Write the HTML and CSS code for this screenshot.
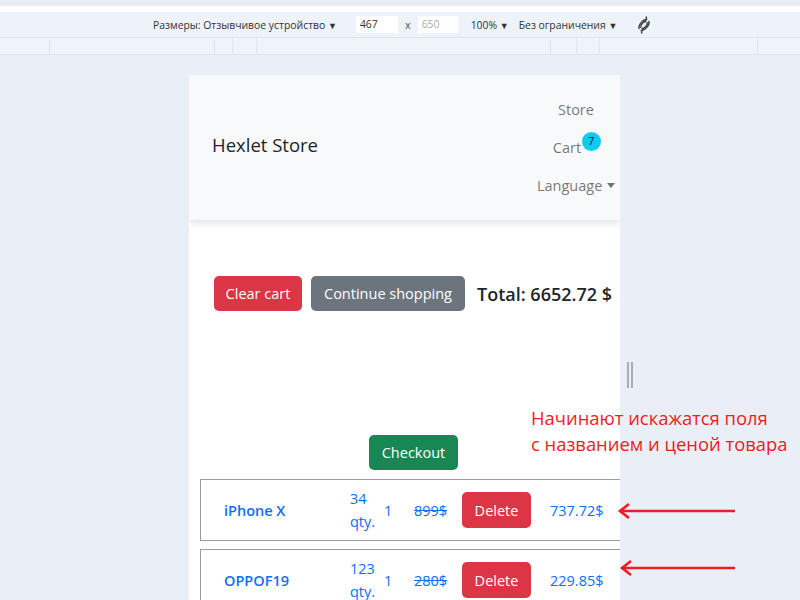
FILE: index.html
```html
<!DOCTYPE html>
<html lang="ru">
<head>
<meta charset="utf-8">
<title>Hexlet Store</title>
<link rel="stylesheet" href="styles.css">
</head>
<body>
<div class="strip-gray"></div>
<div class="strip-white"></div>
<div class="toolbar">
  <span class="tb-item">Размеры: Отзывчивое устройство <span class="tri">▼</span></span>
  <span class="tb-input">467</span>
  <span class="tb-x">x</span>
  <span class="tb-input tb-dim">650</span>
  <span class="tb-item tb-zoom">100% <span class="tri">▼</span></span>
  <span class="tb-item">Без ограничения <span class="tri">▼</span></span>
  <svg class="tb-rotate" width="18" height="18" viewBox="0 0 18 18">
    <g fill="none" stroke="#444" stroke-width="1.5" stroke-linecap="round" transform="rotate(-50 9 9)">
      <path d="M3.2 7.4 A6.2 3.2 0 0 1 14.8 7.4"/>
      <path d="M14.8 10.6 A6.2 3.2 0 0 1 3.2 10.6"/>
      <path d="M5.2 10 A4 2 0 0 0 12.8 10"/>
      <path d="M12.8 8 A4 2 0 0 0 5.2 8"/>
      <path d="M14.8 7.4 L16.6 5.6 M14.8 7.4 L12.6 6.6"/>
      <path d="M3.2 10.6 L1.4 12.4 M3.2 10.6 L5.4 11.4"/>
    </g>
  </svg>
</div>
<div class="ruler">
  <span class="rl" style="width:50px"></span>
  <span class="rl" style="width:165px"></span>
  <span class="rl" style="width:18px"></span>
  <span class="rl" style="width:24px"></span>
  <span class="rl" style="width:294px"></span>
  <span class="rl" style="width:26px"></span>
  <span class="rl" style="width:23px"></span>
  <span class="rl" style="width:158px"></span>
</div>
<div class="stage">
  <div class="viewport">
    <nav class="navbar">
      <span class="brand">Hexlet Store</span>
      <ul class="nav">
        <li class="nav-link">Store</li>
        <li class="nav-link cart">Cart<span class="badge">7</span></li>
        <li class="nav-link">Language <span class="caret"></span></li>
      </ul>
    </nav>
    <main class="content">
      <div class="actions">
        <button class="btn btn-danger">Clear cart</button>
        <button class="btn btn-secondary">Continue shopping</button>
        <span class="total">Total: 6652.72 $</span>
      </div>
      <div class="checkout-wrap">
        <button class="btn btn-success">Checkout</button>
      </div>
      <div class="item">
        <span class="name">iPhone X</span>
        <span class="qty">34<br>qty.</span>
        <span class="count">1</span>
        <span class="old">899$</span>
        <button class="btn btn-danger">Delete</button>
        <span class="price">737.72$</span>
      </div>
      <div class="item">
        <span class="name">OPPOF19</span>
        <span class="qty">123<br>qty.</span>
        <span class="count">1</span>
        <span class="old">280$</span>
        <button class="btn btn-danger">Delete</button>
        <span class="price">229.85$</span>
      </div>
    </main>
  </div>
  <div class="handle"></div>
</div>
<div class="note">Начинают искажатся поля<br>с названием и ценой товара</div>
<svg class="arrow arrow-1" width="124" height="16" viewBox="0 0 124 16">
  <path d="M4 8 H118 M12 1 L3 8 L12 15" fill="none" stroke="#ee1c24" stroke-width="2.6"/>
</svg>
<svg class="arrow arrow-2" width="124" height="16" viewBox="0 0 124 16">
  <path d="M4 8 H116 M12 1 L3 8 L12 15" fill="none" stroke="#ee1c24" stroke-width="2.6"/>
</svg>
</body>
</html>
```
FILE: styles.css
```css
* { box-sizing: border-box; }
html, body { margin: 0; padding: 0; }
body {
  width: 800px;
  height: 600px;
  overflow: hidden;
  background: #eaeef6;
  font-family: "Open Sans", "Noto Sans", sans-serif;
  position: relative;
}
.strip-gray { height: 6px; background: #e8ecf4; }
.strip-white { height: 6px; background: #ffffff; }
.toolbar {
  height: 25px;
  background: #eef2f9;
  display: flex;
  align-items: center;
  padding-left: 153px;
  font-size: 10.4px;
  color: #333;
}
.tb-item { white-space: nowrap; }
.tri { font-size: 9px; }
.tb-input {
  background: #fff;
  width: 42px;
  height: 17px;
  line-height: 17px;
  padding-left: 4px;
  margin-left: 19px;
}
.tb-dim { color: #aaa; margin-left: 7px; width: 40px; }
.tb-x { margin-left: 7px; font-size: 11px; color: #555; }
.tb-zoom { margin-left: 13px; margin-right: 10px; }
.tb-rotate { margin-left: 18px; }
.ruler {
  height: 18px;
  background: #eff3fa;
  border-top: 1px solid #dfe6f1;
  border-bottom: 1px solid #dfe6f1;
  display: flex;
}
.rl { height: 100%; border-right: 1px solid #dce4f0; flex: none; }
.stage {
  display: flex;
  padding-top: 20px;
  padding-left: 189px;
  height: 545px;
}
.viewport {
  width: 431px;
  height: 525px;
  background: #fff;
  overflow: hidden;
  flex: none;
}
.handle {
  width: 6px;
  height: 26px;
  margin-top: 287px;
  margin-left: 7px;
  border-left: 2px solid #a9adb3;
  border-right: 2px solid #a9adb3;
}
.navbar {
  height: 145px;
  background: #f8f9fa;
  box-shadow: 0 3px 8px rgba(0,0,0,0.12);
  display: flex;
  align-items: center;
  padding-left: 23px;
  position: relative;
}
.brand {
  font-size: 18.5px;
  color: #212529;
  font-weight: 500;
  flex: 1;
  margin-bottom: 6px;
}
.nav {
  list-style: none;
  margin: 0;
  padding: 0;
  width: 80px;
  margin-right: 4px;
  display: flex;
  flex-direction: column;
  align-items: center;
}
.nav-link {
  font-size: 14.5px;
  line-height: 24px;
  padding: 7px 0;
  color: rgba(0,0,0,0.55);
  position: relative;
}
.cart { margin-right: 18px; }
.badge {
  position: absolute;
  left: 29px;
  top: 3px;
  width: 19px;
  height: 19px;
  border-radius: 50%;
  background: #0dcaf0;
  color: #111;
  font-size: 10.5px;
  line-height: 19px;
  text-align: center;
}
.caret {
  display: inline-block;
  width: 0;
  height: 0;
  border-left: 4.5px solid transparent;
  border-right: 4.5px solid transparent;
  border-top: 5px solid rgba(0,0,0,0.55);
  vertical-align: 3px;
  margin-left: 1px;
}
.content { padding-top: 56px; }
.actions {
  display: flex;
  align-items: center;
  padding-left: 25px;
  gap: 9px;
}
.btn {
  font-family: inherit;
  font-size: 14.5px;
  height: 35px;
  border: none;
  border-radius: 5px;
  color: #fff;
  padding: 0 11px;
  cursor: pointer;
}
.btn-danger { background: #dc3545; }
.btn-secondary { background: #6c757d; }
.btn-success { background: #198754; }
.actions .btn-danger { width: 88px; }
.actions .btn-secondary { width: 154px; }
.total {
  font-size: 18px;
  font-weight: 600;
  color: #212529;
  margin-left: 3px;
  white-space: nowrap;
}
.checkout-wrap {
  padding-top: 124px;
  padding-left: 180px;
  height: 168px;
}
.checkout-wrap .btn { width: 89px; }
.item {
  margin-left: 11px;
  width: 440px;
  height: 62px;
  border: 1px solid #9a9a9a;
  display: grid;
  grid-template-columns: 126px 34px 30px 48px 88px auto;
  align-items: center;
  padding-left: 23px;
  margin-bottom: 8px;
  font-size: 14.5px;
  color: #0d6efd;
}
.name { font-weight: 600; }
.qty { line-height: 23px; }
.old { text-decoration: line-through; }
.item .btn { width: 69px; height: 36px; }
.note {
  position: absolute;
  left: 531px;
  top: 405px;
  color: #ee1c24;
  font-size: 18.4px;
  line-height: 26px;
  white-space: nowrap;
}
.arrow { position: absolute; }
.arrow-1 { left: 617px; top: 503px; }
.arrow-2 { left: 619px; top: 560px; }
```
